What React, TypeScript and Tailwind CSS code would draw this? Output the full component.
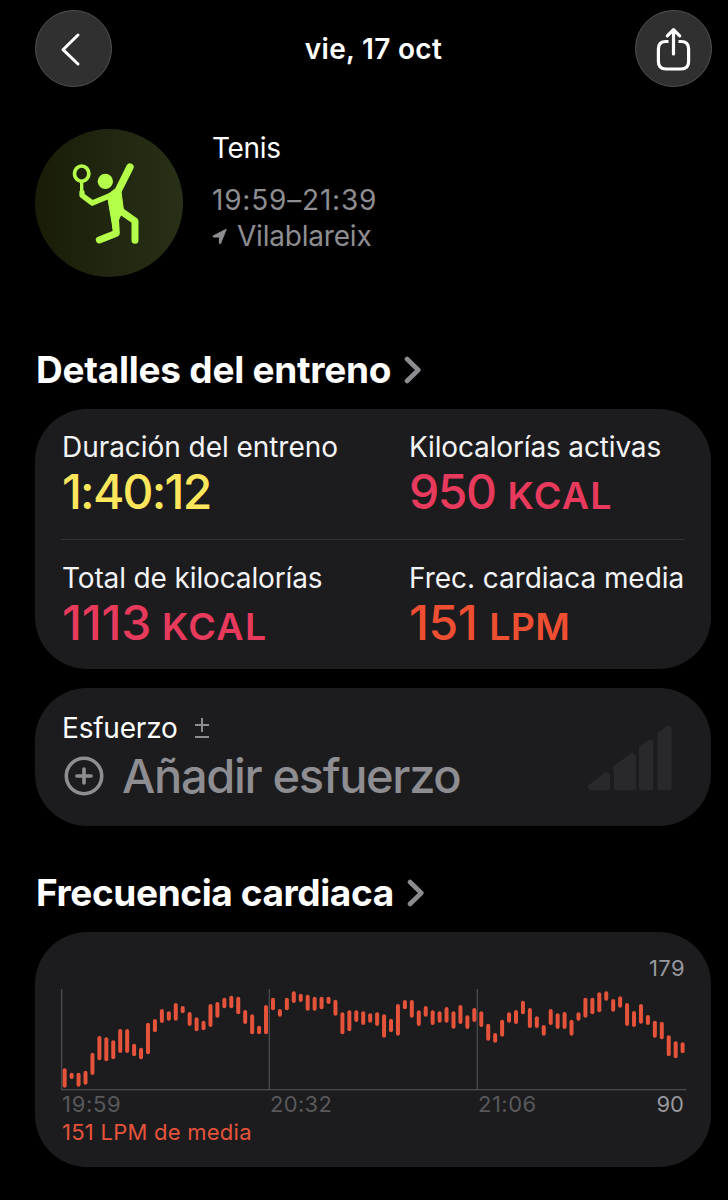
import type { ReactNode } from "react";

// [top, bottom] of each heart rate sample, in chart units
const SAMPLES = [
  [325, 383], [338, 357], [338, 380], [332, 374], [278, 345], [228, 301],
  [232, 304], [241, 298], [207, 279], [207, 279], [251, 289], [263, 298],
  [188, 283], [177, 217], [147, 189], [154, 182], [129, 182], [138, 160],
  [156, 198], [172, 214], [182, 211], [132, 201], [126, 173], [113, 145],
  [107, 145], [110, 163], [150, 192], [163, 223], [197, 223], [135, 223],
  [113, 151], [147, 170], [113, 151], [94, 129], [101, 126], [104, 152],
  [110, 152], [110, 148], [110, 132], [119, 167], [157, 223], [151, 214],
  [151, 186], [154, 195], [160, 188], [157, 198], [163, 233], [176, 217],
  [132, 227], [120, 148], [120, 173], [151, 198], [138, 170], [151, 195],
  [154, 188], [141, 188], [154, 206], [135, 192], [166, 207], [144, 186],
  [154, 201], [191, 242], [219, 248], [179, 230], [157, 188], [150, 192],
  [122, 163], [144, 204], [169, 204], [195, 227], [147, 195], [160, 207],
  [156, 207], [179, 227], [157, 182], [113, 173], [113, 163], [97, 157],
  [94, 122], [117, 155], [109, 143], [129, 198], [153, 201], [132, 191],
  [165, 195], [182, 233], [185, 238], [226, 289], [244, 295], [247, 280],
];

function RoundButton({ label, children }: { label: string; children: ReactNode }) {
  return (
    <button
      aria-label={label}
      className="grid size-[77px] place-items-center rounded-full border-[1.5px] border-[#525253] bg-[#303031]"
    >
      {children}
    </button>
  );
}

function SectionTitle({ className, children }: { className: string; children: ReactNode }) {
  return (
    <h2 className="flex h-11 items-center gap-[13px] pl-px text-[37px] font-bold leading-[44px] text-white">
      <span className={className}>{children}</span>
      <svg viewBox="0 0 18 28" className="h-7 w-[18px]" fill="none">
        <path
          d="M3 3 L14.3 14 L3 25"
          stroke="#8b8b90"
          strokeWidth="4.6"
          strokeLinecap="round"
          strokeLinejoin="round"
        />
      </svg>
    </h2>
  );
}

type MetricProps = {
  label: string;
  labelClass: string;
  value: string;
  valueClass: string;
  unit?: string;
  unitClass?: string;
};

function Metric({ label, labelClass, value, valueClass, unit, unitClass }: MetricProps) {
  return (
    <div className="whitespace-nowrap pl-px">
      <p className={`text-[28px] leading-9 text-[#f4f4f6] ${labelClass}`}>{label}</p>
      <p className={`text-[48px] font-medium leading-[54px] ${valueClass}`}>
        {value}
        {unit && <span className={`text-[37.5px] font-semibold ${unitClass}`}>{unit}</span>}
      </p>
    </div>
  );
}

function TennisIcon() {
  return (
    <svg viewBox="0 0 444 444" className="size-[148px]" fill="none" stroke="#b4ff4a">
      <ellipse cx="140" cy="134" rx="21.5" ry="23" strokeWidth="11" />
      <path d="M140 158 V192" strokeWidth="10" />
      <path
        d="M141 190 V199 L172 222 L228 199"
        strokeWidth="16"
        strokeLinecap="round"
        strokeLinejoin="round"
      />
      <circle cx="211" cy="157" r="23" fill="#b4ff4a" stroke="none" />
      <path d="M285 114 L247 190" strokeWidth="22" strokeLinecap="round" />
      <path
        d="M217 198 L240 180 L258 188 L265 240 L252 270 L236 310 Z"
        fill="#b4ff4a"
        strokeWidth="3"
        strokeLinejoin="round"
      />
      <path
        d="M246 238 L300 276 V334"
        strokeWidth="21"
        strokeLinecap="round"
        strokeLinejoin="round"
      />
      <path
        d="M240 250 L244 313 L193 333"
        strokeWidth="21"
        strokeLinecap="round"
        strokeLinejoin="round"
      />
    </svg>
  );
}

function HeartRateChart() {
  return (
    <svg viewBox="0 87 1878 306" className="h-[102px] w-[626px]">
      <g fill="#4a4a4c">
        <rect x="0" y="87" width="4" height="303" />
        <rect x="623" y="87" width="4" height="303" />
        <rect x="1247" y="87" width="4" height="303" />
        <rect x="0" y="387" width="1876" height="4" />
      </g>
      {SAMPLES.map(([top, bottom], i) => (
        <rect
          key={i}
          x={5 + i * 20.83}
          y={top}
          width="12"
          height={bottom - top}
          rx="6"
          fill="#e5533a"
        />
      ))}
    </svg>
  );
}

export default function App() {
  return (
    <main className="h-[1200px] w-[728px] overflow-hidden bg-black pl-[35px] pr-[17px] pt-[10px] font-['Inter','Liberation_Sans',sans-serif] text-white">
      <header className="-mr-px flex h-[77px] items-center justify-between">
        <RoundButton label="Atrás">
          <svg viewBox="0 0 24 36" className="mr-[5px] h-9 w-6" fill="none">
            <path
              d="M19 4 L4 18.7 L19 33"
              stroke="white"
              strokeWidth="3"
              strokeLinecap="round"
              strokeLinejoin="round"
            />
          </svg>
        </RoundButton>
        <h1 className="pt-px text-[28px] font-semibold leading-9 tracking-[0.3px]">vie, 17 oct</h1>
        <RoundButton label="Compartir">
          <svg
            viewBox="0 0 36 44"
            className="h-11 w-9"
            fill="none"
            stroke="white"
            strokeWidth="3.2"
            strokeLinecap="round"
            strokeLinejoin="round"
          >
            <path
              d="M12.5 14.5 H10 Q2.4 14.5 2.4 22 V34.5 Q2.4 42 10 42 H25 Q32.6 42 32.6 34.5 V22 Q32.6 14.5 25 14.5 H22.5"
              strokeLinecap="butt"
            />
            <path d="M17.5 27 V2.8 M11.3 8.8 L17.5 2.6 L23.7 8.8" />
          </svg>
        </RoundButton>
      </header>

      <section className="mt-[42px] flex h-[148px]">
        <div className="size-[148px] shrink-0 rounded-full bg-linear-to-r from-[#191d08] to-[#283017]">
          <TennisIcon />
        </div>
        <div className="ml-[29px] text-[28px] leading-9">
          <p className="pt-px tracking-[-0.3px]">Tenis</p>
          <p className="mt-[16px] tracking-[0.8px] text-[#8d8d92]">19:59–21:39</p>
          <p className="flex items-center text-[#8d8d92]">
            <svg viewBox="0 0 16 17" className="mr-[9px] h-[17px] w-4">
              <path
                d="M14.3 1.2 L1 8 Q.8 9 1.8 9 H7.4 V15 Q7.7 16.4 8.6 15.4 Z"
                fill="#8d8d92"
                stroke="#8d8d92"
                strokeLinejoin="round"
              />
            </svg>
            <span className="tracking-[-0.2px]">Vilablareix</span>
          </p>
        </div>
      </section>

      <section className="mt-[71px]">
        <SectionTitle className="tracking-[-0.25px]">Detalles del entreno</SectionTitle>
        <div className="mt-[17px] h-[260px] rounded-[52px] bg-[#1c1c1e] px-[26px] pt-[20px]">
          <div className="grid h-[110px] grid-cols-[347px_1fr]">
            <Metric
              label="Duración del entreno"
              labelClass="tracking-[-0.05px]"
              value="1:40:12"
              valueClass="tracking-[-1.8px] text-[#fde55c]"
            />
            <Metric
              label="Kilocalorías activas"
              labelClass="tracking-[-0.15px]"
              value="950"
              valueClass="tracking-[-1.5px] text-[#e83a5c]"
              unit="KCAL"
              unitClass="ml-3 tracking-[1.3px]"
            />
          </div>
          <div className="grid grid-cols-[347px_1fr] border-t border-[#333336] pt-[20px]">
            <Metric
              label="Total de kilocalorías"
              labelClass="tracking-[-0.13px]"
              value="1113"
              valueClass="tracking-[-0.2px] text-[#e83a5c]"
              unit="KCAL"
              unitClass="ml-[11px] tracking-[1.3px]"
            />
            <Metric
              label="Frec. cardiaca media"
              labelClass="tracking-[-0.05px]"
              value="151"
              valueClass="tracking-[-0.4px] text-[#ee4e31]"
              unit="LPM"
              unitClass="ml-[12px] tracking-[0.3px]"
            />
          </div>
        </div>
      </section>

      <section className="mt-[19px] flex h-[138px] justify-between rounded-[52px] bg-[#1c1c1e] pl-[26px] pr-[39px] pt-[22px]">
        <div className="whitespace-nowrap">
          <p className="flex items-center pl-px text-[28px] leading-9">
            <span className="tracking-[-0.2px]">Esfuerzo</span>
            <svg viewBox="0 0 14 20" className="ml-[17px] h-5 w-[14px]" stroke="#8d8d92" strokeWidth="2">
              <path d="M0 7 H14 M7 0 V14 M0 19 H14" />
            </svg>
          </p>
          <p className="mt-[3px] flex h-[54px] items-center text-[47px] font-medium leading-[54px] text-[#8d8d92]">
            <svg
              viewBox="0 0 40 40"
              className="ml-[3px] mr-[18px] size-10"
              fill="none"
              stroke="#8d8d92"
              strokeLinecap="round"
            >
              <circle cx="20" cy="20" r="17.7" strokeWidth="3.6" />
              <path d="M20 13 V27 M13 20 H27" strokeWidth="3.6" />
            </svg>
            <span className="tracking-[-1.35px]">Añadir esfuerzo</span>
          </p>
        </div>
        <svg
          viewBox="84 132 252 198"
          className="mt-[15px] h-[66px] w-[84px]"
          fill="#29292b"
          stroke="#29292b"
          strokeWidth="12"
          strokeLinejoin="round"
        >
          <path d="M90 317 L138 280 L144 282 V322 H92 Z" />
          <path d="M167 258 L216 222 L222 226 V322 H167 Z" />
          <path d="M243 200 L270 182 L274 184 V322 H243 Z" />
          <path d="M298 160 L324 140 L329 143 V322 H298 Z" />
        </svg>
      </section>

      <section className="mt-[45px]">
        <SectionTitle className="tracking-[-0.4px]">Frecuencia cardiaca</SectionTitle>
        <div className="mt-[17px] h-[235px] rounded-[52px] bg-[#1c1c1e] px-[26px] pt-[22px] text-[22px] leading-7 text-[#98989d]">
          <p className="text-right tracking-[0.4px]">179</p>
          <div className="mt-[7px]">
            <HeartRateChart />
          </div>
          <div className="-mt-px flex text-[#58585b]">
            <span className="w-[208px] pl-px tracking-[0.7px]">19:59</span>
            <span className="w-[208px] pl-px tracking-[0.3px]">20:32</span>
            <span className="pl-px tracking-[0.5px]">21:06</span>
            <span className="ml-auto pr-px text-[#98989d]">90</span>
          </div>
          <p className="pl-px tracking-[0.25px] text-[#e5533a]">151 LPM de media</p>
        </div>
      </section>
    </main>
  );
}
